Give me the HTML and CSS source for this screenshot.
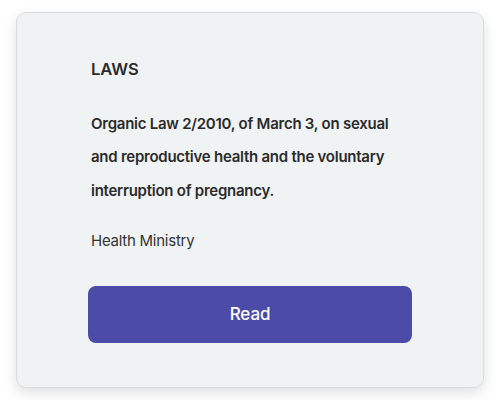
FILE: index.html
```html
<!DOCTYPE html>
<html>
<head>
<meta charset="utf-8">
<link rel="stylesheet" href="styles.css">
</head>
<body>
<div class="card">
  <div class="content">
    <div class="type">LAWS</div>
    <div class="title">Organic Law 2/2010, of March 3, on sexual and reproductive health and the voluntary interruption of pregnancy.</div>
    <div class="source">Health Ministry</div>
    <button class="read">Read</button>
  </div>
</div>
</body>
</html>
```
FILE: styles.css
```css
html, body {
  margin: 0;
  padding: 0;
  background: #ffffff;
}
body {
  font-family: Inter, "Noto Sans", sans-serif;
  color: #2b2b2b;
  padding: 12px 16px;
}
.card {
  box-sizing: border-box;
  width: 468px;
  height: 376px;
  background: #f0f3f4;
  border: 1px solid #d9dcdd;
  border-radius: 10px;
  box-shadow: 0 5px 14px rgba(0, 0, 0, 0.12);
  display: flex;
  justify-content: center;
  padding-top: 44px;
}
.content {
  width: 324px;
  display: flex;
  flex-direction: column;
}
.type {
  font-size: 16.5px;
  font-weight: 600;
  padding-left: 3px;
  line-height: 24px;
}
.title {
  font-size: 15px;
  font-weight: 600;
  line-height: 33.3px;
  padding-left: 3px;
  margin-top: 26px;
  letter-spacing: -0.25px;
}
.source {
  font-size: 15px;
  font-weight: 400;
  line-height: 24px;
  padding-left: 3px;
  margin-top: 22px;
  color: #333;
  letter-spacing: -0.25px;
}
.read {
  margin-top: 33px;
  height: 57px;
  border: none;
  border-radius: 8px;
  background: #4c4ca8;
  color: #ffffff;
  font-family: Inter, "Noto Sans", sans-serif;
  font-size: 17px;
  font-weight: 500;
  letter-spacing: -0.1px;
}
```
